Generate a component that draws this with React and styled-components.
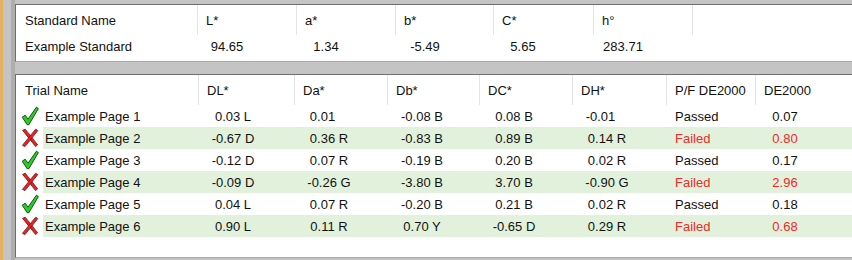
import React from "react";
import styled, { createGlobalStyle } from "styled-components";

const GlobalStyle = createGlobalStyle`
  html, body { margin: 0; padding: 0; }
  body {
    background: #c4c4c4;
    font-family: "Liberation Sans", Arial, sans-serif;
    font-size: 13px;
    color: #111;
  }
`;

const Page = styled.div`
  display: flex;
  height: 260px;
  overflow: hidden;
  border-left: 3px solid #e4b25c;
  background: #c4c4c4;
`;

const Content = styled.div`
  flex: 1;
  min-width: 0;
  margin-left: 8px;
  border-left: 4px solid #aeaeae;
  display: flex;
  flex-direction: column;
  padding-top: 4px;
  gap: 12px;
`;

const Panel = styled.div`
  background: #fff;
  border-top: 1px solid #6f6f6f;
  border-left: 1px solid #6f6f6f;
  border-bottom: 1px solid #a9a9a9;
  height: ${(p) => p.$h}px;
  box-sizing: border-box;
  display: flex;
  flex-direction: column;
`;

const HeaderRow = styled.div`
  display: flex;
  height: 30px;
`;

const HeadCell = styled.div`
  box-sizing: border-box;
  width: ${(p) => (p.$w ? `${p.$w}px` : "auto")};
  flex: ${(p) => (p.$w ? "none" : "1")};
  border-right: ${(p) => (p.$last ? "none" : "1px solid #e4e4e4")};
  padding-left: ${(p) => p.$pad ?? 8}px;
  display: flex;
  align-items: center;
  white-space: nowrap;
`;

const Row = styled.div`
  display: flex;
  height: 22px;
  align-items: stretch;
`;

const IconCell = styled.div`
  width: 27px;
  flex: none;
  box-sizing: border-box;
  padding-left: 5px;
  display: flex;
  align-items: center;
`;

const RowBody = styled.div`
  flex: 1;
  display: flex;
  background: ${(p) => (p.$alt ? "#e1f1dc" : "#fff")};
`;

const NameCell = styled.div`
  width: ${(p) => p.$w}px;
  flex: none;
  box-sizing: border-box;
  padding-left: ${(p) => p.$pad}px;
  display: flex;
  align-items: center;
  white-space: nowrap;
`;

const ValueCell = styled.div`
  width: ${(p) => (p.$w ? `${p.$w}px` : "auto")};
  flex: ${(p) => (p.$w ? "none" : "1")};
  box-sizing: border-box;
  padding-left: 1px;
  display: flex;
  align-items: center;
  color: ${(p) => (p.$fail ? "#ee2a2a" : "#111")};
`;

const Centered = styled.span`
  display: inline-block;
  width: ${(p) => p.$c}px;
  text-align: center;
  white-space: nowrap;
`;

const LeftText = styled.span`
  padding-left: 7px;
  white-space: nowrap;
`;

const Ghost = styled.span`
  visibility: hidden;
`;

const CheckIcon = () => (
  <svg width="18" height="20" viewBox="0 0 18 20">
    <path
      d="M1.2 11.2 L4.2 9.2 L7 13.2 L15.4 1.2 L17.4 2.6 L7.8 18.8 L6.2 18.8 Z"
      fill="#24d024"
      stroke="#163c10"
      strokeWidth="0.9"
      strokeLinejoin="round"
    />
  </svg>
);

const CrossIcon = () => (
  <svg width="18" height="20" viewBox="0 0 18 20">
    <path
      d="M1.6 2.4 L4.2 1.2 L16.6 16.8 L14.6 18.6 Z"
      fill="#ea2222"
      stroke="#6a1414"
      strokeWidth="0.8"
      strokeLinejoin="round"
    />
    <path
      d="M14.6 1.2 L16.8 2.6 L4 18.6 L1.4 17.4 Z"
      fill="#ea2222"
      stroke="#6a1414"
      strokeWidth="0.8"
      strokeLinejoin="round"
    />
  </svg>
);

const stdCols = [
  { label: "Standard Name", w: 182, pad: 9 },
  { label: "L*", w: 99 },
  { label: "a*", w: 99 },
  { label: "b*", w: 98 },
  { label: "C*", w: 100 },
  { label: "h°", w: 99 },
];
const stdValues = ["94.65", "1.34", "-5.49", "5.65", "283.71"];

const trialCols = [
  { label: "Trial Name", w: 183, pad: 9 },
  { label: "DL*", w: 96 },
  { label: "Da*", w: 93 },
  { label: "Db*", w: 92 },
  { label: "DC*", w: 93 },
  { label: "DH*", w: 94 },
  { label: "P/F DE2000", w: 89 },
  { label: "DE2000" },
];

const trials = [
  { name: "Example Page 1", pass: true, v: [["0.03", "L"], ["0.01", ""], ["-0.08", "B"], ["0.08", "B"], ["-0.01", ""]], de: "0.07" },
  { name: "Example Page 2", pass: false, v: [["-0.67", "D"], ["0.36", "R"], ["-0.83", "B"], ["0.89", "B"], ["0.14", "R"]], de: "0.80" },
  { name: "Example Page 3", pass: true, v: [["-0.12", "D"], ["0.07", "R"], ["-0.19", "B"], ["0.20", "B"], ["0.02", "R"]], de: "0.17" },
  { name: "Example Page 4", pass: false, v: [["-0.09", "D"], ["-0.26", "G"], ["-3.80", "B"], ["3.70", "B"], ["-0.90", "G"]], de: "2.96" },
  { name: "Example Page 5", pass: true, v: [["0.04", "L"], ["0.07", "R"], ["-0.20", "B"], ["0.21", "B"], ["0.02", "R"]], de: "0.18" },
  { name: "Example Page 6", pass: false, v: [["0.90", "L"], ["0.11", "R"], ["0.70", "Y"], ["-0.65", "D"], ["0.29", "R"]], de: "0.68" },
];

const Header = ({ cols }) => (
  <HeaderRow>
    {cols.map((c) => (
      <HeadCell key={c.label} $w={c.w} $pad={c.pad} $last={!c.w}>
        {c.label}
      </HeadCell>
    ))}
    {cols[cols.length - 1].w && <HeadCell $last />}
  </HeaderRow>
);

const Spacer = styled.div`
  height: 4px;
`;

export default function App() {
  return (
    <>
      <GlobalStyle />
      <Page>
        <Content>
          <Panel $h={58}>
            <Header cols={stdCols} />
            <Row>
              <NameCell $w={182} $pad={9}>Example Standard</NameCell>
              {stdValues.map((v, i) => (
                <ValueCell key={i} $w={stdCols[i + 1].w}>
                  <Centered $c={56}>{v}</Centered>
                </ValueCell>
              ))}
              <ValueCell />
            </Row>
            <Spacer />
          </Panel>
          <Panel $h={184}>
            <Header cols={trialCols} />
            {trials.map((t, r) => (
              <Row key={t.name}>
                <IconCell>{t.pass ? <CheckIcon /> : <CrossIcon />}</IconCell>
                <RowBody $alt={r % 2 === 1}>
                  <NameCell $w={156} $pad={2}>{t.name}</NameCell>
                  {t.v.map(([num, letter], i) => (
                    <ValueCell key={i} $w={trialCols[i + 1].w}>
                      <Centered $c={66}>
                        {num} {letter ? letter : <Ghost>R</Ghost>}
                      </Centered>
                    </ValueCell>
                  ))}
                  <ValueCell $w={89} $fail={!t.pass}>
                    <LeftText>{t.pass ? "Passed" : "Failed"}</LeftText>
                  </ValueCell>
                  <ValueCell $fail={!t.pass}>
                    <Centered $c={56}>{t.de}</Centered>
                  </ValueCell>
                </RowBody>
              </Row>
            ))}
          </Panel>
        </Content>
      </Page>
    </>
  );
}
